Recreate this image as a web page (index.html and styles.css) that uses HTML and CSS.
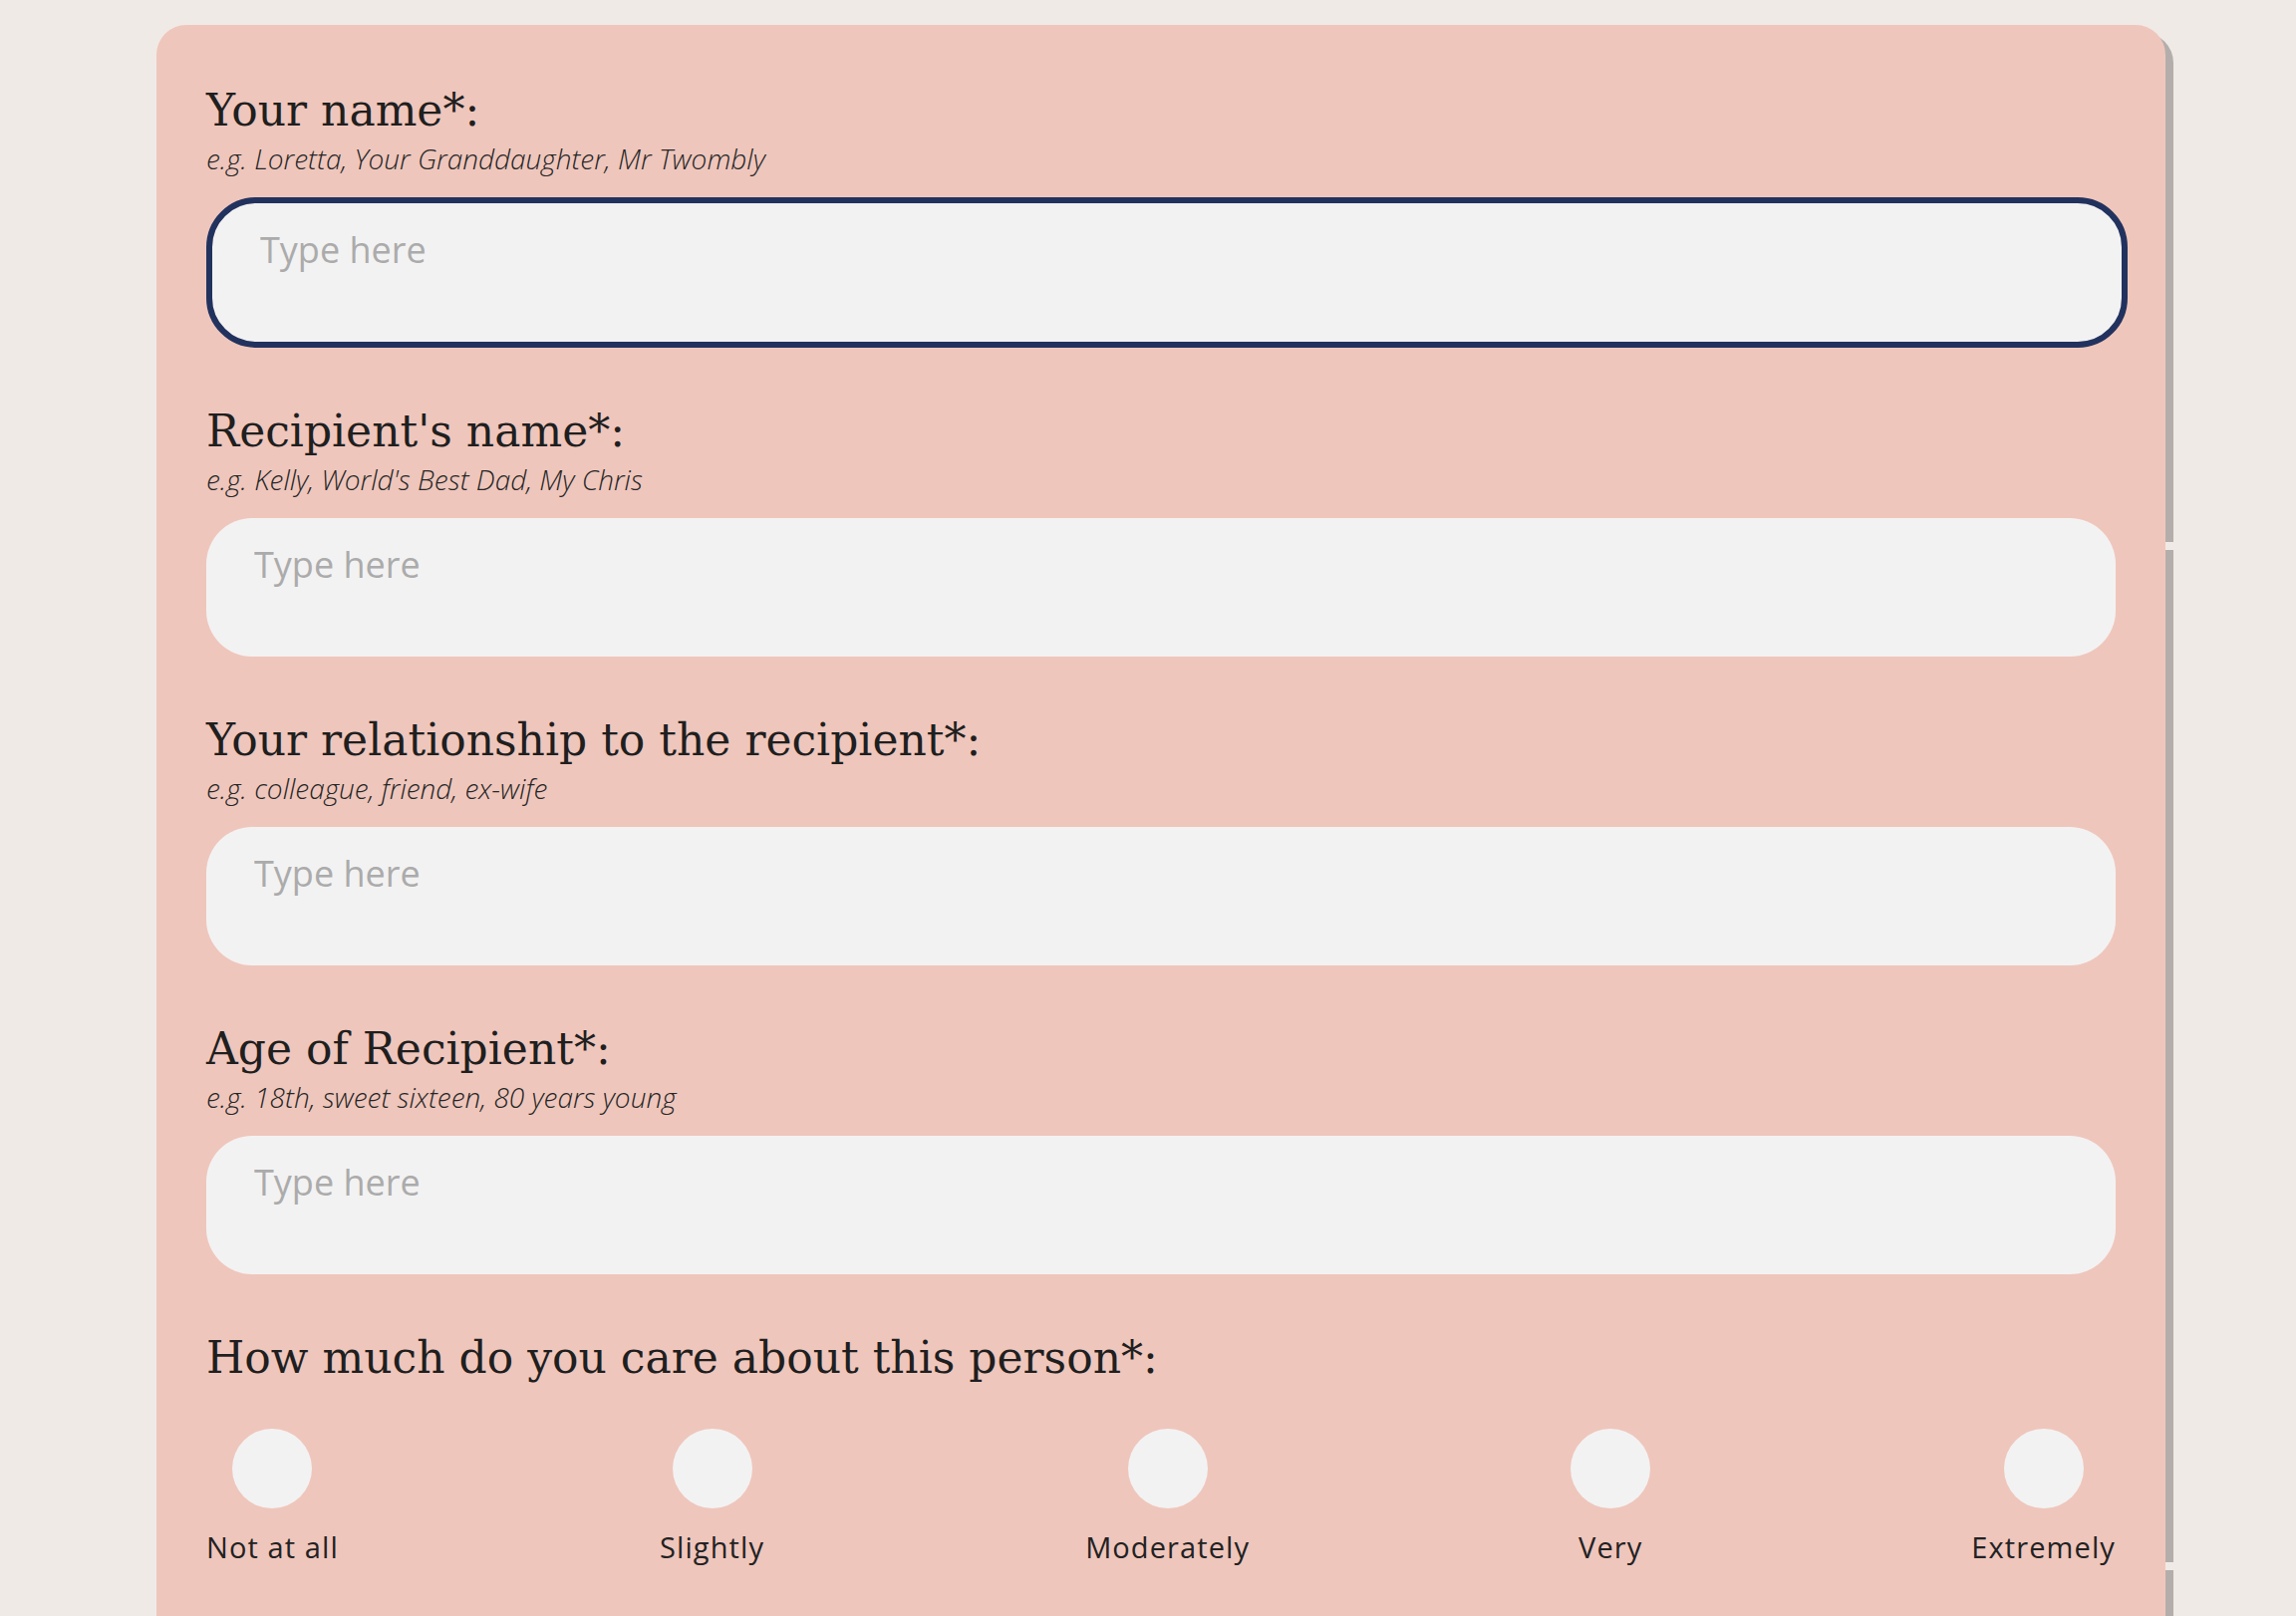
FILE: index.html
```html
<!DOCTYPE html>
<html lang="en">
<head>
<meta charset="utf-8">
<title>Card form</title>
<link rel="stylesheet" href="styles.css">
</head>
<body>
<main class="card">
  <span class="notch notch-a"></span>
  <span class="notch notch-b"></span>
  <div class="field">
    <label class="label" for="f1">Your name*:</label>
    <p class="hint">e.g. Loretta, Your Granddaughter, Mr Twombly</p>
    <input id="f1" class="text-input is-focused" type="text" placeholder="Type here">
  </div>
  <div class="field">
    <label class="label" for="f2">Recipient's name*:</label>
    <p class="hint">e.g. Kelly, World's Best Dad, My Chris</p>
    <input id="f2" class="text-input" type="text" placeholder="Type here">
  </div>
  <div class="field">
    <label class="label" for="f3">Your relationship to the recipient*:</label>
    <p class="hint">e.g. colleague, friend, ex-wife</p>
    <input id="f3" class="text-input" type="text" placeholder="Type here">
  </div>
  <div class="field">
    <label class="label" for="f4">Age of Recipient*:</label>
    <p class="hint">e.g. 18th, sweet sixteen, 80 years young</p>
    <input id="f4" class="text-input" type="text" placeholder="Type here">
  </div>
  <div class="field">
    <p class="label">How much do you care about this person*:</p>
    <div class="scale">
      <label class="option"><span class="dot"></span><span class="option-text">Not at all</span></label>
      <label class="option"><span class="dot"></span><span class="option-text">Slightly</span></label>
      <label class="option"><span class="dot"></span><span class="option-text">Moderately</span></label>
      <label class="option"><span class="dot"></span><span class="option-text">Very</span></label>
      <label class="option"><span class="dot"></span><span class="option-text">Extremely</span></label>
    </div>
  </div>
</main>
</body>
</html>
```
FILE: styles.css
```css
html, body {
  margin: 0;
  padding: 0;
}
body {
  background: #f0eae6;
  color: #222222;
  font-family: "Open Sans", "Lato", sans-serif;
  overflow: hidden;
}
.card {
  position: relative;
  box-sizing: border-box;
  width: 2016px;
  margin: 25px 0 0 157px;
  padding: 60px 50px 300px;
  background: #efc6bc;
  border-radius: 30px 30px 0 0;
  box-shadow: 8px 8px 0 #b3aeab;
}
.notch {
  position: absolute;
  right: -8px;
  width: 8px;
  height: 8px;
  background: #f0eae6;
}
.notch-a { top: 519px; }
.notch-b { top: 1543px; }
.field {
  margin-bottom: 58px;
}
.label {
  display: block;
  margin: 0;
  font-family: "DejaVu Serif", "Liberation Serif", serif;
  font-size: 44px;
  line-height: 52px;
  font-weight: 400;
  color: #1f1f1f;
}
.hint {
  margin: 5px 0 0;
  font-family: "Open Sans", "Lato", sans-serif;
  font-style: italic;
  font-weight: 300;
  font-size: 28px;
  line-height: 34px;
  color: #262626;
}
.text-input {
  display: block;
  box-sizing: content-box;
  width: calc(100% - 96px);
  height: 44px;
  margin: 22px 0 0;
  padding: 25px 48px 70px;
  border: 0;
  border-radius: 46px;
  background: #f3f2f2;
  font-family: "Open Sans", "Lato", sans-serif;
  font-size: 36px;
  line-height: 44px;
  color: #222222;
  outline: none;
}
.text-input::placeholder {
  color: #ababab;
}
.text-input.is-focused {
  border: 6px solid #22325e;
  border-radius: 50px;
}
.scale {
  display: flex;
  justify-content: space-between;
  margin-top: 45px;
}
.option {
  display: flex;
  flex-direction: column;
  align-items: center;
}
.dot {
  display: block;
  width: 80px;
  height: 80px;
  border-radius: 50%;
  background: #f3f2f2;
}
.option-text {
  display: block;
  margin-top: 22px;
  font-family: "Open Sans", "Lato", sans-serif;
  font-size: 29px;
  line-height: 34px;
  letter-spacing: 1.1px;
  color: #222222;
}
```
